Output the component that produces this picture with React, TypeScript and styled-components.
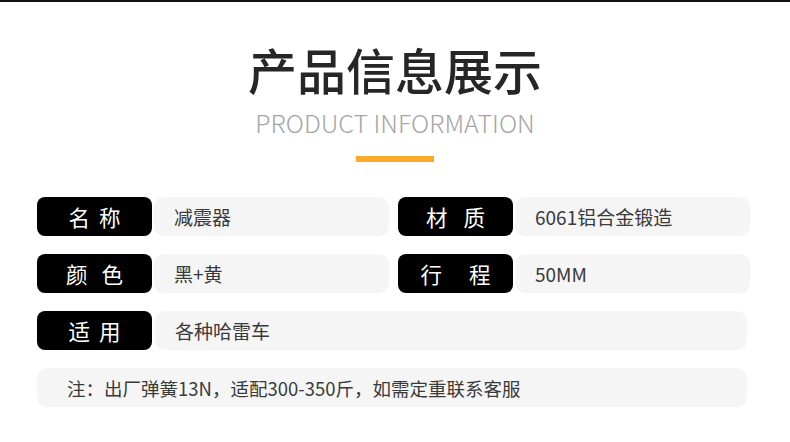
import React from 'react'
import styled, { createGlobalStyle } from 'styled-components'

const GlobalStyle = createGlobalStyle`
  html, body {
    margin: 0;
    padding: 0;
    background: #fff;
  }
  body {
    font-family: "Noto Sans CJK SC", "Noto Sans", sans-serif;
    color: #333;
  }
`

const Page = styled.div`
  width: 790px;
  height: 442px;
  overflow: hidden;
  background: #fff;
`

const TopLine = styled.div`
  height: 2px;
  background: #111;
`

const Header = styled.div`
  display: flex;
  flex-direction: column;
  align-items: center;
  padding-top: 42px;
`

const Title = styled.h1`
  margin: 0;
  font-size: 49px;
  line-height: 50px;
  font-weight: 500;
  color: #262626;
`

const SubTitle = styled.div`
  margin-top: 14px;
  font-size: 25px;
  line-height: 28px;
  font-weight: 300;
  color: #a6a6a6;
`

const Bar = styled.div`
  margin-top: 20px;
  width: 78px;
  height: 6px;
  background: #fbaa2b;
`

const Table = styled.div`
  margin: 35px 40px 0 37px;
  display: grid;
  grid-template-columns: 1fr 1fr;
  column-gap: 9px;
  row-gap: 18px;
`

const Row = styled.div<{ wide?: boolean }>`
  display: flex;
  gap: ${({ wide }) => (wide ? '3px' : '2px')};
  height: 39px;
  grid-column: ${({ wide }) => (wide ? '1 / span 2' : 'auto')};
  padding-right: ${({ wide }) => (wide ? '3px' : '0')};
`

const Label = styled.div<{ spread: number }>`
  flex: 0 0 115px;
  display: flex;
  align-items: center;
  justify-content: center;
  gap: ${({ spread }) => spread}px;
  background: #000;
  border-radius: 8px;
  color: #fff;
  font-size: 21.5px;
`

const Value = styled.div`
  flex: 1;
  display: flex;
  align-items: center;
  padding-left: 20px;
  background: #f5f5f5;
  border-radius: 10px;
  color: #3a3a3a;
  font-size: 19px;
`

const Note = styled(Value)`
  grid-column: 1 / span 2;
  height: 39px;
  padding-left: 30px;
  margin-right: 3px;
  font-size: 18.5px;
`

const items = [
  { label: ['名', '称'], spread: 9, value: '减震器' },
  { label: ['材', '质'], spread: 16, value: '6061铝合金锻造' },
  { label: ['颜', '色'], spread: 14, value: '黑+黄' },
  { label: ['行', '程'], spread: 27, value: '50MM' }
]

export default function App() {
  return (
    <Page>
      <GlobalStyle />
      <TopLine />
      <Header>
        <Title>产品信息展示</Title>
        <SubTitle>PRODUCT INFORMATION</SubTitle>
        <Bar />
      </Header>
      <Table>
        {items.map(item => (
          <Row key={item.value}>
            <Label spread={item.spread}>
              <span>{item.label[0]}</span>
              <span>{item.label[1]}</span>
            </Label>
            <Value>{item.value}</Value>
          </Row>
        ))}
        <Row wide>
          <Label spread={9}>
            <span>适</span>
            <span>用</span>
          </Label>
          <Value>各种哈雷车</Value>
        </Row>
        <Note>注：出厂弹簧13N，适配300-350斤，如需定重联系客服</Note>
      </Table>
    </Page>
  )
}
